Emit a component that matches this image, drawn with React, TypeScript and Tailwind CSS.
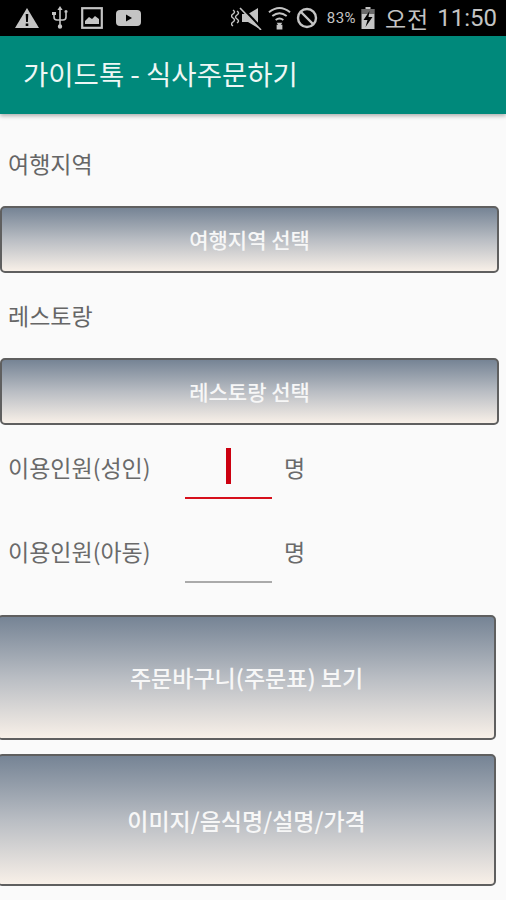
const font = { fontFamily: '"Noto Sans CJK KR", "Liberation Sans", sans-serif' };

function StatusBar() {
  return (
    <div className="flex h-9 items-center justify-between bg-black pl-[15px] pr-[9px] text-[#c4c4c4]">
      <div className="flex items-center gap-[13px]">
        <svg width="24" height="22" viewBox="0 0 24 22">
          <path fill="#c4c4c4" d="M12 1 24 21H0Z" />
          <path fill="#000" d="M10.7 7h2.6l-.4 8h-1.800ZM10.700 16.500h2.600v2.500h-2.600Z" />
        </svg>
        <svg width="16" height="24" viewBox="0 0 16 24" fill="none" stroke="#c4c4c4" strokeWidth="1.600">
          <path d="M8 3v18M2 8v3q0 3 3 3h6q3 0 3-3V7" />
          <path fill="#c4c4c4" stroke="none" d="M8 0l2.600 4H5.400ZM0 6h4v3H0ZM12.400 5.500a1.600 1.600 0 1 0 3.200 0a1.600 1.600 0 1 0-3.200 0M5.800 20.500a2.200 2.200 0 1 0 4.400 0a2.200 2.200 0 1 0-4.400 0" />
        </svg>
        <svg width="22" height="22" viewBox="0 0 22 22">
          <rect x="1.200" y="1.200" width="19.600" height="19.600" fill="none" stroke="#c4c4c4" strokeWidth="2.200" />
          <path fill="#c4c4c4" d="M4 17v-3l4-4 3 2 3-3 4 3v5Z" />
        </svg>
        <svg width="25" height="18" viewBox="0 0 25 18">
          <rect x="0" y="1" width="25" height="16" rx="4" fill="#c4c4c4" />
          <path fill="#000" d="M10 5.500v7l6-3.500Z" />
        </svg>
      </div>
      <div className="flex items-center">
        <svg width="32" height="24" viewBox="0 0 32 24" fill="none" stroke="#c4c4c4">
          <path strokeWidth="1.500" d="M2 4q3 2 0 4t0 4t0 4t0 4M6 5q3 2 0 4t0 4t0 4" />
          <path fill="#c4c4c4" stroke="none" d="M11 8h6l10-6v20l-10-6h-6Z" />
          <path stroke="#000" strokeWidth="3" d="M10 1l20 21" />
          <path strokeWidth="1.600" d="M9 2l21 22" />
        </svg>
        <svg className="ml-[5px]" width="23" height="26" viewBox="0 0 24 26" fill="none" stroke="#c4c4c4" strokeWidth="2">
          <path d="M1 7q11-9 22 0M4.500 11q7.500-6 15 0M8 15q4-3 8 0" />
          <path fill="#c4c4c4" stroke="none" d="M12 22l-3-4h6ZM9 20h6v5H9Z" />
        </svg>
        <svg className="ml-[5px]" width="22" height="22" viewBox="0 0 22 22" fill="none" stroke="#c4c4c4" strokeWidth="2.400">
          <circle cx="11" cy="11" r="9" />
          <path d="M4.500 4.500l13 13" />
        </svg>
        <span className="ml-[9px] text-[15px] leading-none tracking-[0.4px]" style={{ fontFamily: '"Roboto", sans-serif' }}>83%</span>
        <svg className="ml-[4px]" width="16" height="24" viewBox="0 0 15 24">
          <path fill="#c4c4c4" d="M5 1h5v2h4v20H1V3h4Z" />
          <path fill="#000" d="M1 3h13v5H1Z" opacity=".45" />
          <path fill="#000" d="M9 5 3 14h4l-2 7 7-10H8Z" />
        </svg>
        <span className="ml-[9px] text-[23px] leading-none tracking-[1px]" style={font}>오전</span>
        <span className="ml-[8px] text-[24px] leading-none" style={{ fontFamily: '"Roboto", sans-serif' }}>11:50</span>
      </div>
    </div>
  );
}

function Btn({ label, h, text }: { label: string; h: string; text: string }) {
  return (
    <div
      className={`flex w-[499px] items-center justify-center rounded-[5px] border-2 border-[#5f5f5f] bg-gradient-to-b from-[#768495] via-[#b9bdc3] to-[#f8f0e8] font-medium text-[#f7f7f7] ${h} ${text}`}
    >
      {label}
    </div>
  );
}

function PersonRow({ label, active }: { label: string; active?: boolean }) {
  return (
    <div className="flex h-[84px] items-start pl-2 text-[23px] text-[#6a6a6a]">
      <span className="mt-[12px] w-[177px] leading-[32px]">{label}</span>
      <div className={`h-[60px] w-[87px] border-b-2 ${active ? 'border-[#d6101c]' : 'border-[#aaaaaa]'}`}>
        {active && <div className="mx-auto mt-[9px] h-[36px] w-[5px] bg-[#cc0010]" />}
      </div>
      <span className="ml-[12px] mt-[12px] leading-[32px]">명</span>
    </div>
  );
}

export default function App() {
  return (
    <div className="h-[900px] w-[506px] overflow-hidden bg-[#fafafa]" style={font}>
      <StatusBar />
      <div className="flex h-[78px] items-center bg-[#00897b] pl-[23px] text-[27.500px] text-[#eef7f5] shadow-[0_2px_4px_rgba(0,0,0,0.3)]">
        <span className="-mt-[2px]">가이드톡 - 식사주문하기</span>
      </div>

      <div className="pl-2 pt-[33px] text-[23px] leading-[32px] text-[#666666]">여행지역</div>
      <div className="mt-[27px]">
        <Btn label="여행지역 선택" h="h-[67px]" text="text-[21px]" />
      </div>
      <div className="pl-2 pt-[26px] text-[23px] leading-[32px] text-[#666666]">레스토랑</div>
      <div className="mt-[27px]">
        <Btn label="레스토랑 선택" h="h-[67px]" text="text-[21px]" />
      </div>

      <div className="pt-[14px]">
        <PersonRow label="이용인원(성인)" active />
        <PersonRow label="이용인원(아동)" />
      </div>

      <div className="-ml-[3px] mt-[8px] flex flex-col gap-[14px]">
        <Btn label="주문바구니(주문표) 보기" h="h-[125px]" text="text-[23px]" />
        <Btn label="이미지/음식명/설명/가격" h="h-[132px]" text="text-[23px]" />
      </div>
    </div>
  );
}
